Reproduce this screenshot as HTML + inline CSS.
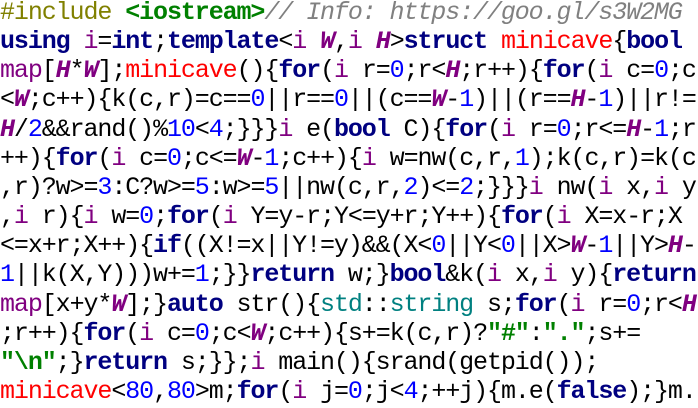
<!DOCTYPE html>
<html><head><meta charset="utf-8"><style>
html,body{margin:0;padding:0;background:#fff;width:698px;height:408px;overflow:hidden}
pre{margin:0;padding:0;font-family:"Liberation Mono",monospace;font-size:25px;letter-spacing:-1.09px;line-height:29.15px;color:#000;position:relative;top:-2px;white-space:pre}
.p{color:#808000}.g{color:#008000;font-weight:bold}.c{color:#808080;font-style:italic}
.k{color:#000080;font-weight:bold}.t{color:#800080}.T{color:#800080;font-weight:bold;font-style:italic}
.r{color:#ff0000}.n{color:#0000ff}.s{color:#008080}
</style></head><body><pre><span class="p">#include </span><span class="g">&lt;iostream&gt;</span><span class="c">// Info: https://goo.gl/s3W2MG</span>
<span class="k">using</span> <span class="t">i</span>=<span class="k">int</span>;<span class="k">template</span>&lt;<span class="t">i</span> <span class="T">W</span>,<span class="t">i</span> <span class="T">H</span>&gt;<span class="k">struct</span> <span class="r">minicave</span>{<span class="k">bool</span>
<span class="t">map</span>[<span class="T">H</span>*<span class="T">W</span>];<span class="r">minicave</span>(){<span class="k">for</span>(<span class="t">i</span> r=<span class="n">0</span>;r&lt;<span class="T">H</span>;r++){<span class="k">for</span>(<span class="t">i</span> c=<span class="n">0</span>;c
&lt;<span class="T">W</span>;c++){k(c,r)=c==<span class="n">0</span>||r==<span class="n">0</span>||(c==<span class="T">W</span>-<span class="n">1</span>)||(r==<span class="T">H</span>-<span class="n">1</span>)||r!=
<span class="T">H</span>/<span class="n">2</span>&amp;&amp;rand()%<span class="n">10</span>&lt;<span class="n">4</span>;}}}<span class="t">i</span> e(<span class="k">bool</span> C){<span class="k">for</span>(<span class="t">i</span> r=<span class="n">0</span>;r&lt;=<span class="T">H</span>-<span class="n">1</span>;r
++){<span class="k">for</span>(<span class="t">i</span> c=<span class="n">0</span>;c&lt;=<span class="T">W</span>-<span class="n">1</span>;c++){<span class="t">i</span> w=nw(c,r,<span class="n">1</span>);k(c,r)=k(c
,r)?w&gt;=<span class="n">3</span>:C?w&gt;=<span class="n">5</span>:w&gt;=<span class="n">5</span>||nw(c,r,<span class="n">2</span>)&lt;=<span class="n">2</span>;}}}<span class="t">i</span> nw(<span class="t">i</span> x,<span class="t">i</span> y
,<span class="t">i</span> r){<span class="t">i</span> w=<span class="n">0</span>;<span class="k">for</span>(<span class="t">i</span> Y=y-r;Y&lt;=y+r;Y++){<span class="k">for</span>(<span class="t">i</span> X=x-r;X
&lt;=x+r;X++){<span class="k">if</span>((X!=x||Y!=y)&amp;&amp;(X&lt;<span class="n">0</span>||Y&lt;<span class="n">0</span>||X&gt;<span class="T">W</span>-<span class="n">1</span>||Y&gt;<span class="T">H</span>-
<span class="n">1</span>||k(X,Y)))w+=<span class="n">1</span>;}}<span class="k">return</span> w;}<span class="k">bool</span>&amp;k(<span class="t">i</span> x,<span class="t">i</span> y){<span class="k">return</span>
<span class="t">map</span>[x+y*<span class="T">W</span>];}<span class="k">auto</span> str(){<span class="s">std</span>::<span class="s">string</span> s;<span class="k">for</span>(<span class="t">i</span> r=<span class="n">0</span>;r&lt;<span class="T">H</span>
;r++){<span class="k">for</span>(<span class="t">i</span> c=<span class="n">0</span>;c&lt;<span class="T">W</span>;c++){s+=k(c,r)?<span class="g">"#"</span>:<span class="g">"."</span>;s+=
<span class="g">"\n"</span>;}<span class="k">return</span> s;}};<span class="t">i</span> main(){srand(getpid());
<span class="r">minicave</span>&lt;<span class="n">80</span>,<span class="n">80</span>&gt;m;<span class="k">for</span>(<span class="t">i</span> j=<span class="n">0</span>;j&lt;<span class="n">4</span>;++j){m.e(<span class="k">false</span>);}m.</pre></body></html>
